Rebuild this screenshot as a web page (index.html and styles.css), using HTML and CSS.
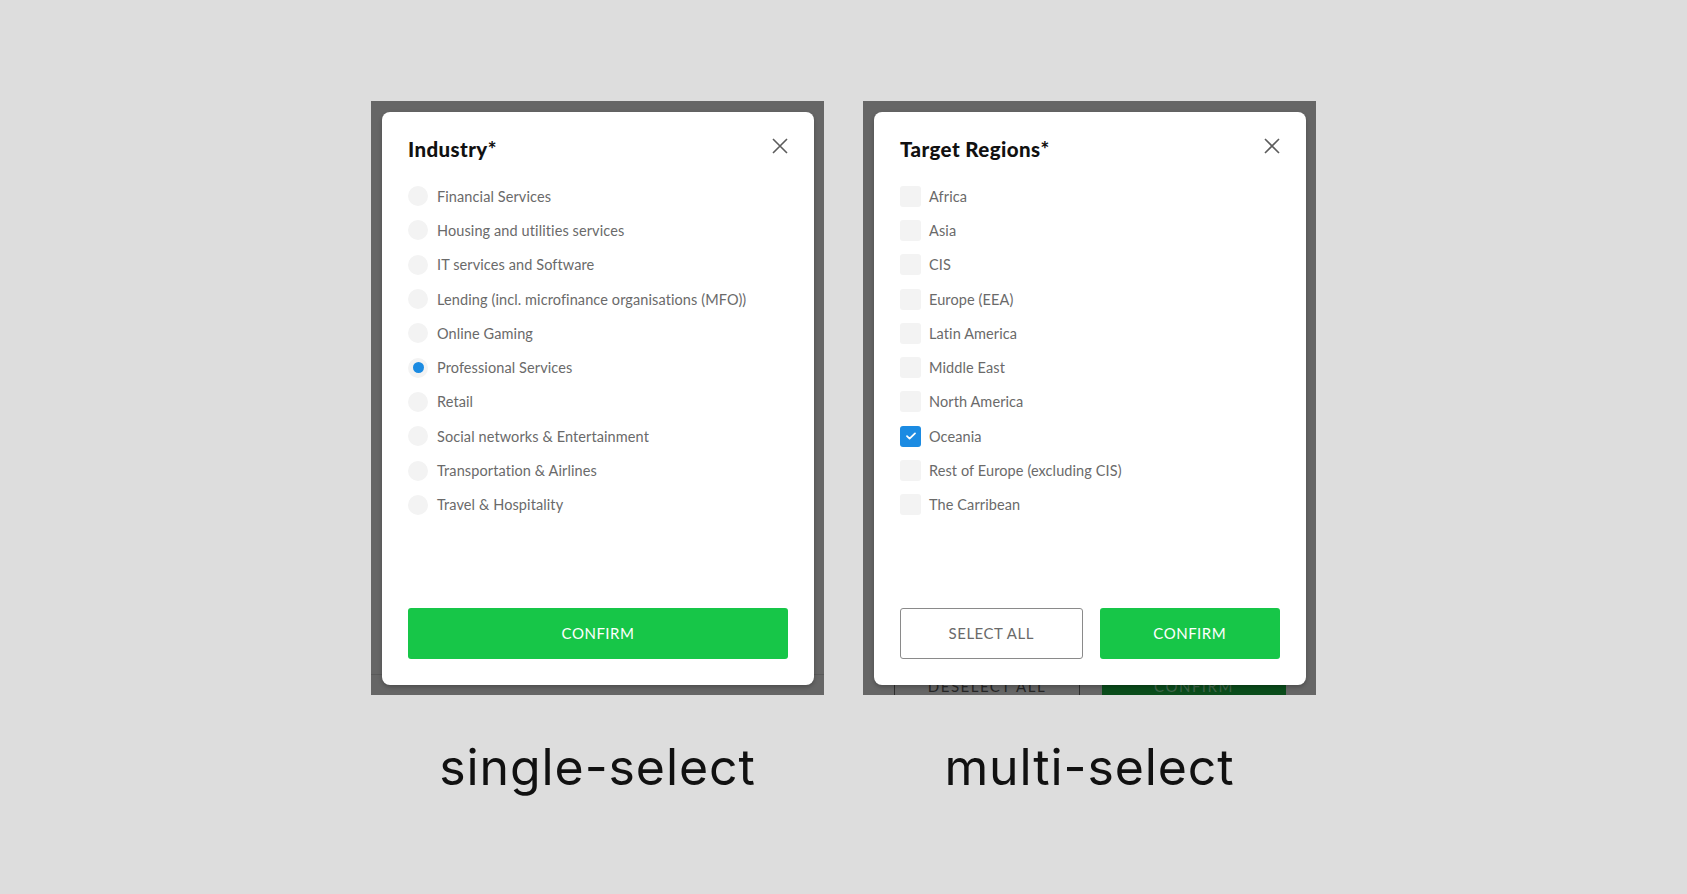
FILE: index.html
```
<!doctype html>
<html lang="en">
<head>
  <meta charset="UTF-8">
  <title>Single-select vs multi-select</title>
  <link rel="stylesheet" href="styles.css">
</head>
<body>

  <main class="stage">

    <section class="demo">
      <div class="screen">
        <div class="backdrop backdrop-single"></div>

        <div class="modal">
          <div class="modal-head">
            <h2 class="modal-title">Industry*</h2>
            <span class="close">
              <svg width="16" height="16" viewBox="0 0 16 16"><path d="M1 1L15 15M15 1L1 15" stroke="#5c5c5c" stroke-width="1.6" fill="none"/></svg>
            </span>
          </div>
          <ul class="options">
            <li class="option"><span class="radio"></span>Financial Services</li>
            <li class="option"><span class="radio"></span>Housing and utilities services</li>
            <li class="option"><span class="radio"></span>IT services and Software</li>
            <li class="option"><span class="radio"></span>Lending (incl. microfinance organisations (MFO))</li>
            <li class="option"><span class="radio"></span>Online Gaming</li>
            <li class="option"><span class="radio radio-on"></span>Professional Services</li>
            <li class="option"><span class="radio"></span>Retail</li>
            <li class="option"><span class="radio"></span>Social networks &amp; Entertainment</li>
            <li class="option"><span class="radio"></span>Transportation &amp; Airlines</li>
            <li class="option"><span class="radio"></span>Travel &amp; Hospitality</li>
          </ul>
          <div class="actions">
            <button class="btn btn-confirm">CONFIRM</button>
          </div>
        </div>
      </div>
      <p class="caption">single-select</p>
    </section>

    <section class="demo">
      <div class="screen">
        <div class="backdrop backdrop-multi">
          <span class="ghost ghost-outline">DESELECT ALL</span>
          <span class="ghost ghost-green">CONFIRM</span>
        </div>

        <div class="modal">
          <div class="modal-head">
            <h2 class="modal-title">Target Regions*</h2>
            <span class="close">
              <svg width="16" height="16" viewBox="0 0 16 16"><path d="M1 1L15 15M15 1L1 15" stroke="#5c5c5c" stroke-width="1.6" fill="none"/></svg>
            </span>
          </div>
          <ul class="options">
            <li class="option"><span class="check"></span>Africa</li>
            <li class="option"><span class="check"></span>Asia</li>
            <li class="option"><span class="check"></span>CIS</li>
            <li class="option"><span class="check"></span>Europe (EEA)</li>
            <li class="option"><span class="check"></span>Latin America</li>
            <li class="option"><span class="check"></span>Middle East</li>
            <li class="option"><span class="check"></span>North America</li>
            <li class="option">
              <span class="check check-on">
                <svg width="12" height="10" viewBox="0 0 12 10"><path d="M2 5.2L4.6 7.6L10 2.4" stroke="#fff" stroke-width="1.8" fill="none" stroke-linecap="round" stroke-linejoin="round"/></svg>
              </span>Oceania
            </li>
            <li class="option"><span class="check"></span>Rest of Europe (excluding CIS)</li>
            <li class="option"><span class="check"></span>The Carribean</li>
          </ul>
          <div class="actions">
            <button class="btn btn-outline">SELECT ALL</button>
            <button class="btn btn-confirm">CONFIRM</button>
          </div>
        </div>
      </div>
      <p class="caption">multi-select</p>
    </section>

  </main>

</body>
</html>
```

FILE: styles.css
```
html, body {
  margin: 0;
  padding: 0;
}

body {
  background: #dddddd;
  font-family: "Lato", "Liberation Sans", sans-serif;
  height: 894px;
  overflow: hidden;
}

.stage {
  display: flex;
  justify-content: center;
  gap: 39px;
  padding-top: 101px;
}

.demo {
  width: 453px;
}

/* the dimmed page behind each modal */
.screen {
  position: relative;
  height: 594px;
  background: #666666;
  overflow: hidden;
  display: flex;
  flex-direction: column;
  justify-content: flex-end;
}

.backdrop-single {
  height: 20px;
  border-top: 1px solid #5a5a5a;
}

.backdrop-multi {
  display: flex;
  gap: 22px;
  padding: 0 30px 0 31px;
  margin-bottom: -16px;
}

.ghost {
  flex: 1;
  height: 50px;
  box-sizing: border-box;
  display: flex;
  align-items: center;
  justify-content: center;
  font-size: 15px;
  letter-spacing: 1.5px;
}

.ghost-outline {
  border: 1px solid #2e2e2e;
  color: #262626;
}

.ghost-green {
  background: #0a4c1b;
  color: #40654a;
}

.modal {
  position: absolute;
  top: 11px;
  left: 11px;
  right: 10px;
  bottom: 10px;
  background: #fff;
  border-radius: 8px;
  box-shadow: 0 2px 4px rgba(0, 0, 0, 0.25);
  padding: 25px 26px 26px;
  display: flex;
  flex-direction: column;
}

.modal-head {
  display: flex;
  justify-content: space-between;
  align-items: flex-start;
}

.modal-title {
  margin: 0;
  font-size: 20.5px;
  line-height: 24px;
  font-weight: 900;
  letter-spacing: 0.4px;
  color: #111;
}

.close {
  display: block;
  width: 16px;
  height: 16px;
  margin-top: 1px;
}

.close svg {
  display: block;
}

.options {
  list-style: none;
  margin: 18px 0 0;
  padding: 0;
  flex: 1;
}

.option {
  display: flex;
  align-items: center;
  height: 34.3px;
  font-size: 14.5px;
  letter-spacing: 0.1px;
  color: #6a6a6a;
}

.radio {
  width: 20px;
  height: 20px;
  border-radius: 50%;
  background: #f3f3f3;
  margin-right: 9px;
  flex-shrink: 0;
  display: flex;
  align-items: center;
  justify-content: center;
}

.radio-on::after {
  content: "";
  width: 11px;
  height: 11px;
  border-radius: 50%;
  background: #1b8be2;
}

.check {
  width: 21px;
  height: 21px;
  border-radius: 3px;
  background: #f3f3f3;
  margin-right: 8px;
  flex-shrink: 0;
  display: flex;
  align-items: center;
  justify-content: center;
}

.check-on {
  background: #1b8be2;
}

.actions {
  display: flex;
  gap: 17px;
}

.btn {
  flex: 1;
  height: 51px;
  border-radius: 3px;
  font-family: "Lato", "Liberation Sans", sans-serif;
  font-size: 15px;
  letter-spacing: 0.5px;
  padding-top: 0;
  padding-bottom: 2px;
  cursor: pointer;
}

.btn-confirm {
  background: #17c648;
  border: 0;
  color: #fff;
}

.btn-outline {
  background: #fff;
  border: 1.5px solid #8a8a8a;
  color: #6a6a6a;
}

.caption {
  margin: 42px 0 0;
  text-align: center;
  font-family: "Inter", "DejaVu Sans", sans-serif;
  font-size: 50px;
  line-height: 60px;
  letter-spacing: 0.9px;
  color: #111;
}
```
